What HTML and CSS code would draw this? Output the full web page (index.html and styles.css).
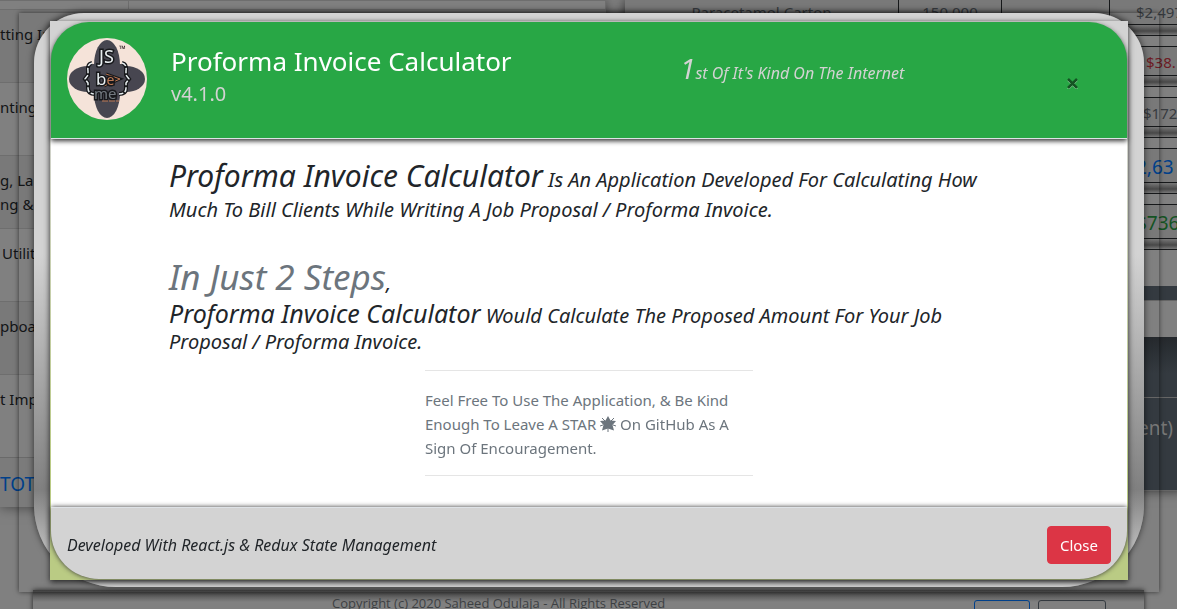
FILE: index.html
```
<!DOCTYPE html>
<html lang="en">
<head>
<meta charset="utf-8">
<title>Proforma Invoice Calculator</title>
<link rel="stylesheet" href="styles.css">
</head>
<body>
<div class="page">
  <div class="columns">
    <section class="left">
      <table class="items">
        <tr class="first"><td></td><td></td></tr>
        <tr><td colspan="2">tting In</td></tr>
        <tr><td colspan="2">nting</td></tr>
        <tr><td colspan="2">g, La<br>ng &amp;</td></tr>
        <tr><td colspan="2" class="indent">Utilit</td></tr>
        <tr><td colspan="2">pboar</td></tr>
        <tr><td colspan="2">t Imp</td></tr>
      </table>
      <div class="total">TOT</div>
    </section>
    <section class="right">
      <div class="row short"><span>Paracetamol Carton</span><span>150,000</span><span></span><span class="end">$2,497</span></div>
      <div class="bar"></div>
      <div class="row red">$38.1</div>
      <div class="bar"></div>
      <div class="row">$172</div>
      <div class="bar"></div>
      <div class="row large blue">2,63</div>
      <div class="bar"></div>
      <div class="row large green">$736</div>
      <div class="bar"></div>
      <div class="panel">
        <div class="panel-top"></div>
        <div class="panel-field"></div>
        <div class="panel-body"></div>
        <div class="panel-note">ent)</div>
      </div>
    </section>
  </div>
  <footer class="foot">
    <span class="copy">Copyright (c) 2020 Saheed Odulaja - All Rights Reserved</span>
    <span class="box box-blue"></span><span class="box"></span>
  </footer>
</div>

<div class="overlay">
  <div class="frame" role="dialog" aria-labelledby="title">
    <div class="dialog">
      <div class="content">
        <header class="head">
          <svg class="logo" viewBox="0 0 80 82" role="img" aria-label="JS be me">
            <ellipse cx="40" cy="41" rx="40" ry="41" fill="#f5e3d9"/>
            <g fill="#474650">
              <ellipse cx="40" cy="27" rx="13" ry="25"/><ellipse cx="40" cy="55" rx="13" ry="25"/>
              <ellipse cx="21" cy="41" rx="19" ry="13"/><ellipse cx="59" cy="41" rx="19" ry="13"/>
              <rect x="20" y="26" width="40" height="30" rx="6"/>
            </g>
            <g fill="none" stroke="#17181b" stroke-width="4"><path d="M25 25q-5 1-4 8v4l-3 4 3 4v5q0 6 7 6M55 25q5 1 4 8v4l3 4-3 4v5q0 6-7 6"/></g>
            <g fill="none" stroke="#e8eef0" stroke-width="1.5" stroke-dasharray="5 2"><path d="M25 25q-5 1-4 8v4l-3 4 3 4v5q0 6 7 6M55 25q5 1 4 8v4l3 4-3 4v5q0 6-7 6"/></g>
            <path d="M39 36l14 5-16 7" fill="none" stroke="#17181b" stroke-width="3"/>
            <path d="M39 36l14 5-16 7" fill="none" stroke="#bd7954"/>
            <g class="logo-text"><text x="32" y="25" font-size="18">JS</text><text x="29" y="47" font-size="17">b<tspan class="logo-accent" font-size="14">e</tspan></text><text class="logo-dark" x="27" y="61" font-size="15">me</text></g>
            <text x="52" y="14" font-size="9" font-weight="bold" fill="#332326">™</text>
            <path d="M35 63h17" stroke="#bd7954" stroke-dasharray="6 1"/>
          </svg>
          <div class="title">
            <h1 id="title">Proforma Invoice Calculator</h1>
            <p>v4.1.0</p>
          </div>
          <em class="tagline"><span>1</span>st Of It's Kind On The Internet</em>
          <button class="dismiss" type="button" aria-label="Dismiss"><svg viewBox="0 0 12 12"><path d="M1 3l9 9M10 3l-9 9" stroke="#a5dbb1" stroke-width="2"/><path d="M1 2l9 9M10 2l-9 9" stroke="#145423" stroke-width="2.5"/></svg></button>
        </header>
        <main class="body">
          <p class="intro"><span>Proforma Invoice Calculator</span> Is An Application Developed For Calculating How Much To Bill Clients While Writing A Job Proposal / Proforma Invoice.</p>
          <p class="steps"><span>In Just 2 Steps</span>,</p>
          <p class="detail"><span>Proforma Invoice Calculator</span> Would Calculate The Proposed Amount For Your Job Proposal / Proforma Invoice.</p>
          <p class="star-note">Feel Free To Use The Application, &amp; Be Kind Enough To Leave A STAR <svg class="star" viewBox="0 0 16 16" aria-label="star"><path d="M8 0l2.5 4.500 5.500.5-3.500 4 1.500 5.500-6-2-6 2 1.500-5.500-3.500-4 5.500-.5z"/><path d="M2 2l3 3M14 2l-3 3M0 10l3-1M16 10l-3-1M8 16v-4" stroke="#6c757d"/></svg> On GitHub As A Sign Of Encouragement.</p>
        </main>
        <footer class="actions">
          <em>Developed With React.js &amp; Redux State Management</em>
          <button class="close" type="button">Close</button>
        </footer>
      </div>
    </div>
  </div>
</div>
</body>
</html>
```
FILE: styles.css
```
* { box-sizing: border-box; }
body { margin: 0; font: 16px/24px "Noto Sans", "Open Sans", sans-serif; color: #212529; overflow: hidden; }
h1, p { margin: 0; font-weight: 400; }

.page { height: 100vh; overflow: hidden; background: #808080; color: #121416; }
.columns { display: grid; grid-template-columns: 606px 1fr; column-gap: 19px; height: 590px; background: #808080; }
.left { box-shadow: 0 0 12px rgba(0,0,0,.5); height: 507px; }
.items { width: 100%; border-collapse: collapse; font-size: 15px; }
.items td { height: 73px; padding: 12px 0; vertical-align: top; border-top: 1px solid #6e6e6e; white-space: nowrap; }
.items .first td { height: 9px; padding: 0; border-right: 1px solid #6e6e6e; }
.items .first td:first-child { width: 128px; }
.items tr:nth-child(even) td { background: #797979; }
.items .indent { padding-left: 2px; }
.total { margin-top: 9px; height: 50px; padding-top: 14px; border-top: 1px solid #6a6a6a; background: #7b7b7b; color: #00408a; font-size: 19px; }

.right { box-shadow: 0 0 12px rgba(0,0,0,.7); height: 490px; }
.row { height: 52px; padding: 15px 0 0 518px; background: #797979; border-bottom: 1px solid #16181a; overflow: hidden; color: #373b3f; line-height: 18px; font-size: 15px; }
.row:not(.short) { height: 30px; margin-top: 10px; padding-top: 6px; border-top: 1px solid #16181a; }
.row.large:not(.short) { height: 35px; padding-left: 511px; padding-top: 9px; font-size: 19px; }
.row.short { display: grid; grid-template-columns: 274px 103px 108px 1fr; height: 25px; padding: 0; text-align: center; }
.short span { padding-top: 3px; border-right: 1px solid #16181a; }
.short .end { padding-left: 26px; border: 0; text-align: left; }
.row.red { color: #6e1b24; padding-left: 521px; }
.row.blue { color: #00408a; }
.row.green { color: #145423; }
.bar { height: 11px; border-bottom: 1px solid #16181a; background: linear-gradient(#777, #484848 60%, #777); }
.panel { margin-top: 36px; border-bottom: 1px solid #656565; background: #343a40; }
.panel-top { height: 14px; }
.panel-field { height: 37px; background: #808080; border-top: 1px solid #666; }
.panel-body { height: 60px; background: linear-gradient(#25292d, #343a40 60%); }
.panel-note { height: 93px; padding: 18px 0 0 513px; border-top: 1px solid #666; color: #777; font-size: 19px; }

.foot { display: flex; height: 40px; margin: 0 33px; padding: 2px 38px 0 299px; background: linear-gradient(#3d3d3d, #808080 12px); box-shadow: 0 0 5px #222; font: 13px/22px "Open Sans", "Noto Sans", sans-serif; color: #3d4043; }
.copy { margin-right: auto; }
.box { width: 68px; margin: 8px 0 0 8px; height: 30px; border: 1px solid #343a40; border-radius: 3px; }
.box-blue { width: 56px; border-color: #00408a; }

.overlay { position: fixed; inset: 0; padding: 13px 18px 17px 19px; }
.frame { padding: 0 15px 5px; box-shadow: 0 0 5px rgba(0,0,0,.6); }
.dialog { padding: 8px 16px 7px; border-radius: 50px 50px 82px 82px; background: linear-gradient(lightgray 42%, gray 83%, lightgray 97%); box-shadow: 0 -1px 7px rgba(0,0,0,.65); }
.content { padding: 1px; background: linear-gradient(lightgray 15%, #bacb84 80%); box-shadow: 0 2px 6px #222; }
.head { display: grid; grid-template-columns: 80px 533px 1fr 24px; height: 117px; padding: 16px 42px 0 16px; border-bottom: 1px solid #dee2e6; border-radius: 38px 38px 0 0; background: #28a745; color: #fff; box-shadow: 0 2px 5px #333; position: relative; }
.logo { width: 80px; height: 82px; }
.logo-text { fill: #e8eef0; stroke: #17181b; stroke-width: 3; paint-order: stroke; font-family: "Noto Sans", sans-serif; }
.logo-accent { fill: #bd7954; }
.logo-dark { fill: #737a80; }
.title { padding: 6px 0 0 24px; }
.title h1 { font-size: 26px; line-height: 34px; }
.title p { color: lightgray; font-size: 20px; line-height: 32px; }
.tagline { padding-top: 12px; color: lightgray; font-size: 16px; line-height: 36px; }
.tagline span { font-size: 28px; }
.dismiss { align-self: start; width: 24px; height: 24px; margin-top: 33px; padding: 6px; border: 0; background: none; }
.dismiss svg { display: block; width: 12px; height: 12px; }
.body { padding: 22px 118px 31px; background: #fff; font-size: 20px; }
.intro, .steps, .detail { font-style: italic; }
.intro { line-height: 30px; }
.intro span { font-size: 30px; }
.steps { margin-top: 34px; line-height: 35px; }
.steps span { color: #6c757d; font-size: 35px; }
.detail { line-height: 26px; }
.detail span { font-size: 25px; }
.star-note { width: 328px; margin: 15px auto 0 256px; padding: 17px 0 15px; border: solid #e5e5e5; border-width: 1px 0; color: #6c757d; font-size: 15px; line-height: 24px; }
.star { width: 16px; height: 16px; vertical-align: -2px; fill: #6c757d; }
.actions { display: flex; align-items: center; justify-content: space-between; height: 72px; padding: 2px 16px 0; border-top: 1px solid #dee2e6; border-radius: 0 0 48px 48px; background: lightgray; box-shadow: 0 0 5px #333; font-size: 16px; }
.close { height: 38px; padding: 0 12px; border: 1px solid #dc3545; border-radius: 4px; background: #dc3545; color: #fff; font: 15px/24px "Noto Sans", "Open Sans", sans-serif; }
```
